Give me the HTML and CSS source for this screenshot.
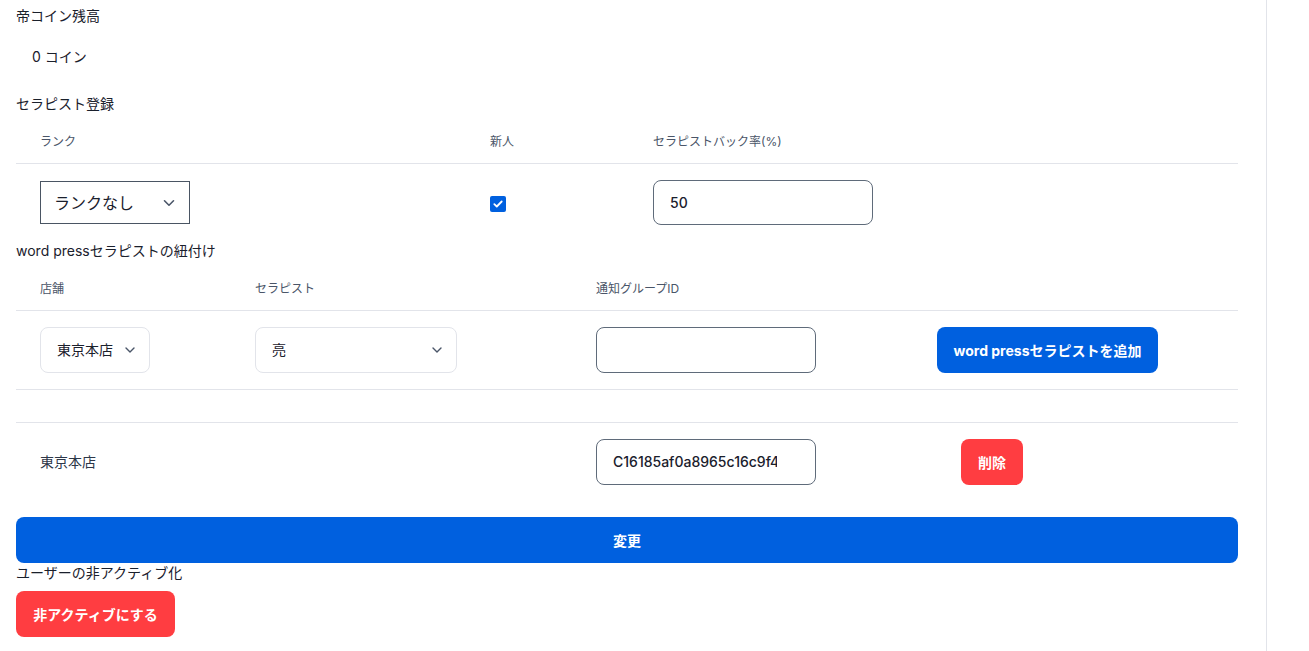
FILE: index.html
```html
<!DOCTYPE html>
<html lang="ja">
<head>
<meta charset="utf-8">
<title>セラピスト</title>
<link rel="stylesheet" href="styles.css">
</head>
<body>
<div class="page">
  <div class="label first">帝コイン残高</div>
  <div class="coins">0 コイン</div>

  <div class="label section">セラピスト登録</div>
  <div class="grid g1 head">
    <div class="cell">ランク</div>
    <div class="cell">新人</div>
    <div class="cell">セラピストバック率(%)</div>
  </div>
  <div class="grid g1 row">
    <div class="cell">
      <div class="select square w150">
        <span>ランクなし</span>
        <svg class="chev" width="12" height="8" viewBox="0 0 12 8"><path d="M1.5 1.8 6 6.2 10.5 1.8" fill="none" stroke="#4a5568" stroke-width="1.6" stroke-linecap="round" stroke-linejoin="round"/></svg>
      </div>
    </div>
    <div class="cell">
      <span class="check"><svg width="10" height="8" viewBox="0 0 10 8"><path d="M1.3 4.2 3.8 6.5 8.7 1.5" fill="none" stroke="#fff" stroke-width="1.8" stroke-linecap="round" stroke-linejoin="round"/></svg></span>
    </div>
    <div class="cell">
      <div class="input w220 h45">50</div>
    </div>
  </div>

  <div class="label">word pressセラピストの紐付け</div>
  <div class="grid g2 head">
    <div class="cell">店舗</div>
    <div class="cell">セラピスト</div>
    <div class="cell">通知グループID</div>
    <div class="cell"></div>
  </div>
  <div class="grid g2 row bordered">
    <div class="cell">
      <div class="select soft w110">
        <span>東京本店</span>
        <svg class="chev" width="10" height="6" viewBox="0 0 10 6"><path d="M1 1 5 5 9 1" fill="none" stroke="#4a5568" stroke-width="1.4" stroke-linecap="round" stroke-linejoin="round"/></svg>
      </div>
    </div>
    <div class="cell">
      <div class="select soft w202">
        <span>亮</span>
        <svg class="chev" width="10" height="6" viewBox="0 0 10 6"><path d="M1 1 5 5 9 1" fill="none" stroke="#4a5568" stroke-width="1.4" stroke-linecap="round" stroke-linejoin="round"/></svg>
      </div>
    </div>
    <div class="cell">
      <div class="input w220 h46"></div>
    </div>
    <div class="cell">
      <button class="btn blue add">word pressセラピストを追加</button>
    </div>
  </div>
  <div class="spacer"></div>
  <div class="grid g3 row">
    <div class="cell plain">東京本店</div>
    <div class="cell">
      <div class="input w220 h46"><span class="clip">C16185af0a8965c16c9f4</span></div>
    </div>
    <div class="cell">
      <button class="btn red del">削除</button>
    </div>
  </div>

  <button class="btn blue wide">変更</button>
  <div class="label tight">ユーザーの非アクティブ化</div>
  <button class="btn red deact">非アクティブにする</button>
</div>
</body>
</html>
```

FILE: styles.css
```css
* { box-sizing: border-box; }
html, body { margin: 0; padding: 0; background: #fff; }
body {
  font-family: Inter, "Noto Sans CJK JP", sans-serif;
  font-size: 14px;
  line-height: 20px;
  color: #1a202c;
}
.page {
  width: 1267px;
  min-height: 651px;
  padding: 0 28px 0 16px;
  border-right: 1px solid #e2e4ea;
}
.label { height: 20px; }
.label.first { padding-top: 6px; height: 26px; }
.coins { margin-top: 21px; padding-left: 16px; }
.label.section { margin-top: 27px; }

.grid { display: grid; align-items: center; }
.g1 { grid-template-columns: 450px 163px 1fr; }
.g2 { grid-template-columns: 215px 341px 341px 1fr; }
.g3 { grid-template-columns: 556px 365px 1fr; }
.cell { padding-left: 24px; }

.head {
  padding: 18px 0 11px;
  border-bottom: 1px solid #e2e4ea;
  font-size: 12px;
  color: #4a5568;
}
.row { padding: 16px 0; }
.row.bordered { border-bottom: 1px solid #e2e4ea; }
.spacer { height: 33px; border-bottom: 1px solid #e2e4ea; }
.plain { color: #2d3748; }

.select {
  display: flex;
  align-items: center;
  justify-content: space-between;
  background: #fff;
}
.select.square {
  height: 43px;
  border: 1px solid #4a5563;
  padding: 0 14px 0 13px;
  font-size: 16px;
}
.select.soft {
  height: 46px;
  border: 1px solid #e2e4ea;
  border-radius: 8px;
  padding: 0 14px 0 16px;
}
.w150 { width: 150px; }
.w110 { width: 110px; }
.w202 { width: 202px; }
.w220 { width: 220px; }
.h45 { height: 45px; }
.h46 { height: 46px; }

.check {
  display: flex;
  align-items: center;
  justify-content: center;
  width: 16px;
  height: 16px;
  border-radius: 2px;
  background: #0060df;
  margin-top: 2px;
}

.input {
  display: flex;
  align-items: center;
  border: 1px solid #5f6b7a;
  border-radius: 8px;
  padding: 0 16px;
  font-weight: 500;
  color: #1a202c;
  white-space: nowrap;
}
.clip { display: block; width: 164px; overflow: hidden; }

.btn {
  font-family: Inter, "Noto Sans CJK JP", sans-serif;
  font-size: 14px;
  font-weight: 700;
  color: #fff;
  border: none;
  border-radius: 8px;
  height: 46px;
  padding: 0;
  cursor: pointer;
  white-space: nowrap;
}
.blue { background: #0060df; }
.red { background: #ff3d41; }
.add { width: 221px; }
.del { width: 62px; }
.wide { display: block; width: 100%; margin-top: 16px; }
.label.tight { height: 20px; }
.deact {
  display: block;
  width: 159px;
  margin-top: 8px;
}
```
